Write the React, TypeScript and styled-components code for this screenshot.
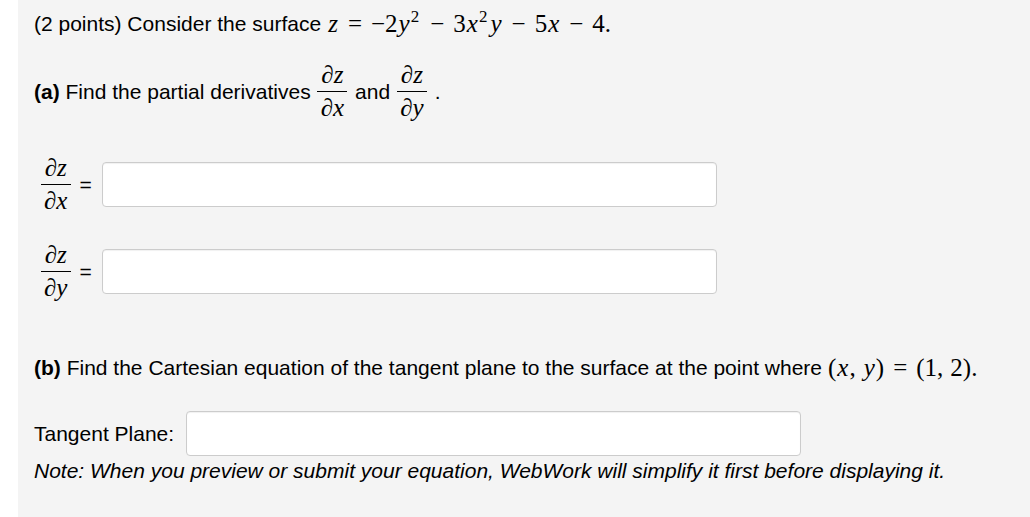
import styled, { createGlobalStyle } from 'styled-components';

const GlobalStyle = createGlobalStyle`
  html, body {
    margin: 0;
    padding: 0;
    background: #ffffff;
  }
  #root {
    height: 517px;
  }
`;

const Panel = styled.div`
  margin-left: 18px;
  height: 517px;
  box-sizing: border-box;
  padding: 10px 16px;
  background: #f4f4f4;
  font-family: 'Liberation Sans', Arial, sans-serif;
  font-size: 21px;
  color: #000;
`;

const Line = styled.div<{ $gap?: number }>`
  line-height: 28px;
  margin-top: ${(p) => p.$gap ?? 0}px;
  display: flex;
  align-items: center;
  white-space: nowrap;
`;

const Math = styled.span`
  font-family: 'Liberation Serif', 'Times New Roman', serif;
  font-size: 25px;
  margin: 0 3px 0 6px;
`;

const V = styled.i`
  font-style: italic;
  margin: 0 1px;
`;

const Sup = styled.sup`
  font-size: 17px;
  vertical-align: 10px;
  line-height: 0;
  margin-right: 2px;
`;

const Op = styled.span`
  margin: 0 9px;
`;

const Comma = styled.span`
  margin-right: 7px;
`;

const Frac = styled.span`
  display: inline-flex;
  flex-direction: column;
  align-items: center;
  font-family: 'Liberation Serif', 'Times New Roman', serif;
  font-style: italic;
  font-size: 25px;
  line-height: 26px;
  margin: 0 7px 0 6px;
`;

const Num = styled.span`
  padding: 0 4px 3px;
  border-bottom: 1px solid #000;
`;

const Den = styled.span`
  padding: 3px 4px 0;
`;

const AnswerRow = styled.div<{ $gap: number }>`
  display: flex;
  align-items: center;
  margin-top: ${(p) => p.$gap}px;
`;

const Equals = styled.span`
  margin: 0 10px 0 1px;
`;

const Field = styled.input`
  width: 615px;
  height: 45px;
  box-sizing: border-box;
  border: 1px solid #cccccc;
  border-radius: 4px;
  background: #ffffff;
  box-shadow: inset 0 1px 1px rgba(0, 0, 0, 0.06);
  outline: none;
`;

const Label = styled.span`
  margin-right: 12px;
`;

const Note = styled.div`
  font-style: italic;
  line-height: 24px;
  margin-top: 3px;
`;

function Partial({ v }: { v: string }) {
  return (
    <Frac>
      <Num>∂z</Num>
      <Den>∂{v}</Den>
    </Frac>
  );
}

export default function App() {
  return (
    <>
      <GlobalStyle />
      <Panel>
        <Line>
          (2 points) Consider the surface
          <Math>
            <V>z</V>
            <Op>=</Op>−2<V>y</V>
            <Sup>2</Sup>
            <Op>−</Op>3<V>x</V>
            <Sup>2</Sup>
            <V>y</V>
            <Op>−</Op>5<V>x</V>
            <Op>−</Op>4.
          </Math>
        </Line>

        <Line $gap={24}>
          <b>(a)</b>&nbsp;Find the partial derivatives
          <Partial v="x" />
          and
          <Partial v="y" />.
        </Line>

        <AnswerRow $gap={34}>
          <Partial v="x" />
          <Equals>=</Equals>
          <Field />
        </AnswerRow>

        <AnswerRow $gap={28}>
          <Partial v="y" />
          <Equals>=</Equals>
          <Field />
        </AnswerRow>

        <Line $gap={53}>
          <b>(b)</b>&nbsp;Find the Cartesian equation of the tangent plane to the surface at the point where
          <Math>
            (<V>x</V>
            <Comma>,</Comma>
            <V>y</V>)<Op>=</Op>(1<Comma>,</Comma>2).
          </Math>
        </Line>

        <AnswerRow $gap={29}>
          <Label>Tangent Plane:</Label>
          <Field />
        </AnswerRow>

        <Note>Note: When you preview or submit your equation, WebWork will simplify it first before displaying it.</Note>
      </Panel>
    </>
  );
}
